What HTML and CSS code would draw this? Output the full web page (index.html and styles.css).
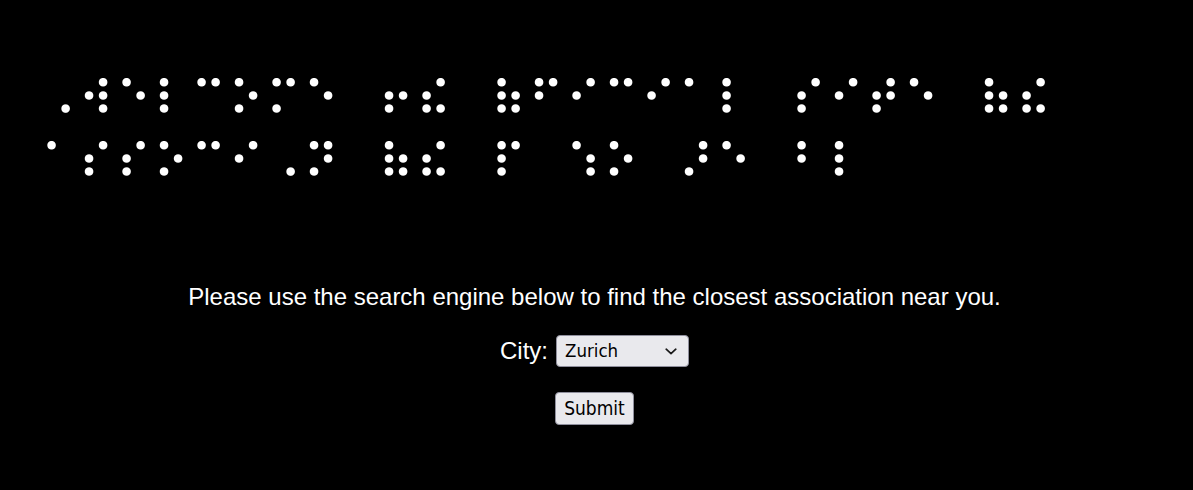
FILE: index.html
```html
<!DOCTYPE html>
<html lang="en">
<head>
<meta charset="utf-8">
<title>Braille association</title>
<link rel="stylesheet" href="styles.css">
</head>
<body>
<svg class="defs" width="0" height="0" aria-hidden="true" focusable="false">
  <filter id="round-dots" color-interpolation-filters="sRGB">
    <feGaussianBlur stdDeviation="2.2"/>
    <feComponentTransfer>
      <feFuncA type="linear" slope="7" intercept="-1.9"/>
    </feComponentTransfer>
  </filter>
</svg>
<main class="page">
  <h1 class="braille">⠠⠺⠑⠇⠉⠕⠍⠑ ⠖⠮ ⠷⠋⠊⠉⠊⠁⠇ ⠎⠊⠞⠑ ⠷⠮ ⠁⠎⠎⠕⠉⠊⠠⠝ ⠷⠮ ⠏ ⠱⠕ ⠜⠑ ⠃⠇</h1>
  <section class="search">
    <p class="intro">Please use the search engine below to find the closest association near you.</p>
    <form class="form">
      <div class="row">
        <label class="label" for="city">City:</label>
        <span class="select-wrap">
          <select class="select" id="city" name="city">
            <option>Zurich</option>
            <option>Geneva</option>
            <option>Basel</option>
            <option>Bern</option>
          </select>
          <svg class="chevron" width="12" height="7" viewBox="0 0 12 7" aria-hidden="true"><polyline points="1.2,1.2 6,5.6 10.8,1.2" fill="none" stroke="#1a1a1a" stroke-width="1.7" stroke-linecap="round" stroke-linejoin="round"/></svg>
        </span>
      </div>
      <div class="row">
        <button class="button" type="submit">Submit</button>
      </div>
    </form>
  </section>
</main>
</body>
</html>
```
FILE: styles.css
```css
html, body {
  margin: 0;
  background: #000;
  color: #fff;
}
.defs {
  position: absolute;
  width: 0;
  height: 0;
  overflow: hidden;
}
.page {
  padding-top: 68px;
}
.braille {
  margin: 0;
  padding: 0 0 0 41px;
  font-family: "DejaVu Sans", sans-serif;
  font-size: 48px;
  font-weight: normal;
  line-height: 63.3px;
  letter-spacing: 2.34px;
  word-spacing: 19.9px;
  filter: url(#round-dots);
}
.search {
  margin-top: 88.8px;
  padding-right: 4px;
  text-align: center;
  font-family: "Liberation Sans", Arial, sans-serif;
  font-size: 24px;
  line-height: 28px;
}
.intro {
  margin: 0 0 23.6px 0;
}
.form {
  display: flex;
  flex-direction: column;
  align-items: center;
  gap: 25px;
}
.row {
  display: flex;
  align-items: center;
  gap: 8px;
}
.label {
  color: #fff;
}
.select-wrap {
  position: relative;
  display: flex;
}
.select {
  appearance: none;
  -webkit-appearance: none;
  width: 133px;
  height: 32px;
  margin: 0;
  font-family: "DejaVu Sans Condensed", "DejaVu Sans", sans-serif;
  font-stretch: condensed;
  font-size: 18.5px;
  color: #000;
  background: #e9e9ed;
  border: 1px solid #8f8f9d;
  border-radius: 4px;
  padding: 0 30px 0 8px;
}
.chevron {
  position: absolute;
  right: 12px;
  top: 13px;
  pointer-events: none;
}
.button {
  width: 79px;
  height: 33px;
  margin: 0;
  font-family: "DejaVu Sans Condensed", "DejaVu Sans", sans-serif;
  font-stretch: condensed;
  font-size: 19px;
  color: #000;
  background: #e9e9ed;
  border: 1px solid #8f8f9d;
  border-radius: 4px;
  padding: 0;
}
```
